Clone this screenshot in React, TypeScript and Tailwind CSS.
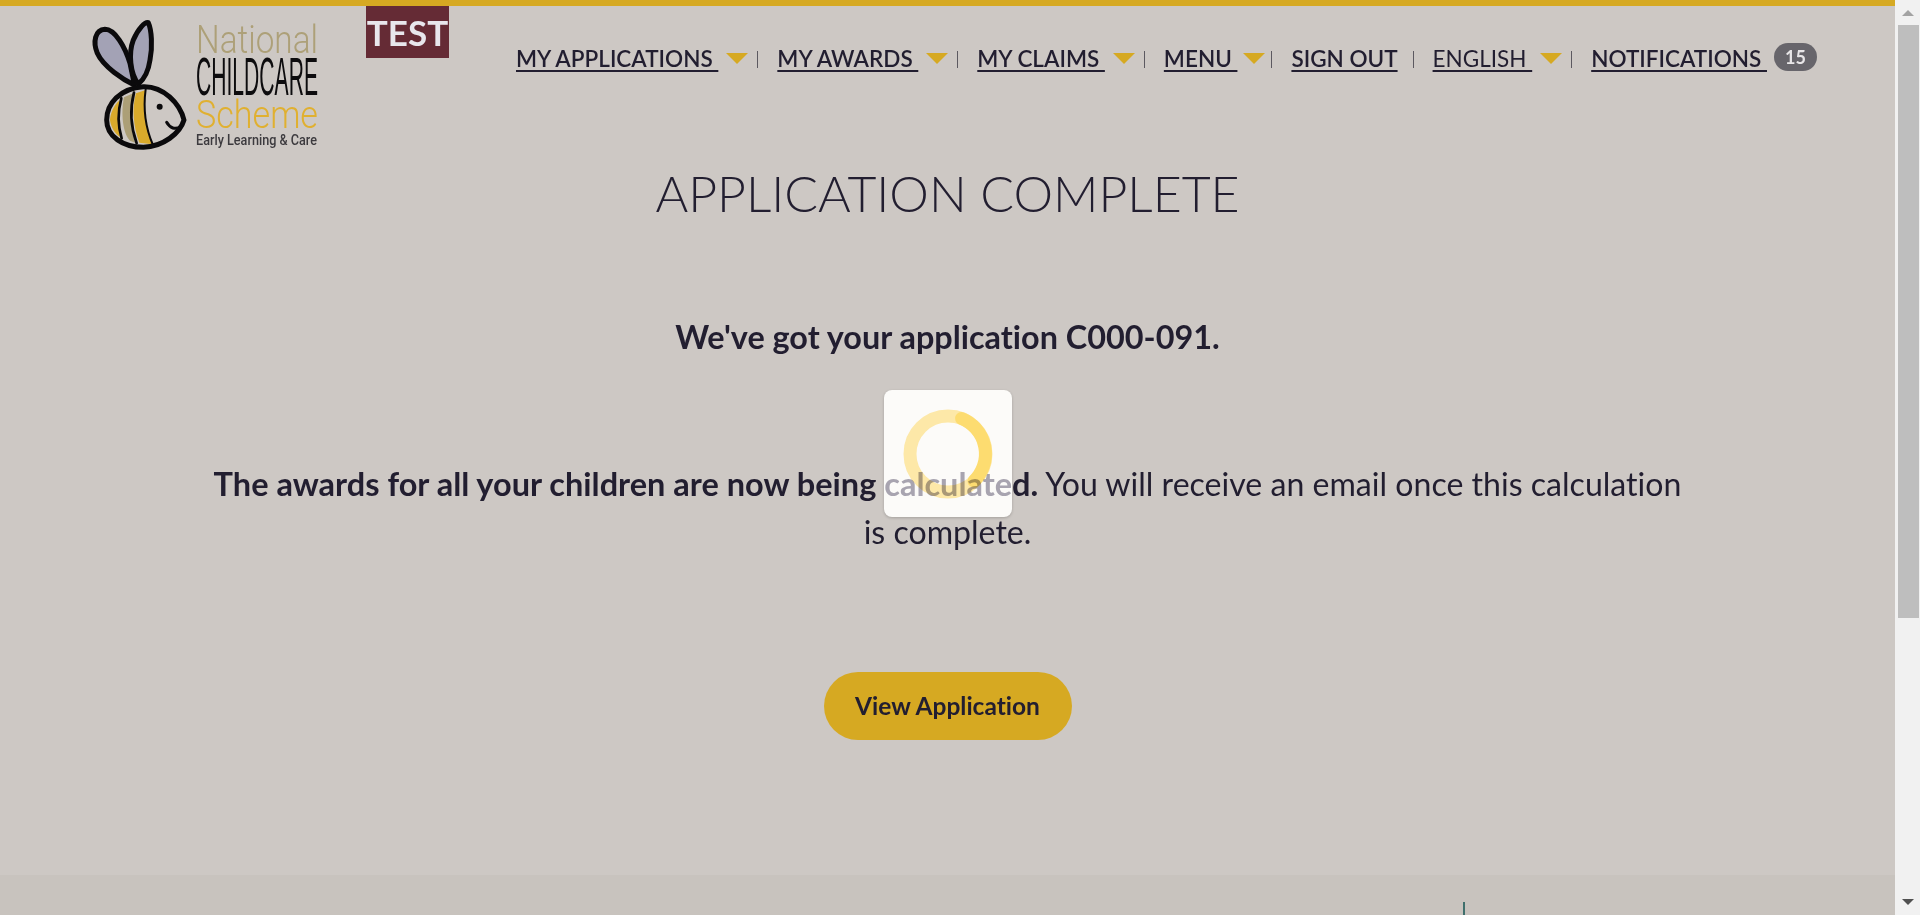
import React from "react";

const lato = "font-['Lato','Liberation_Sans',sans-serif]";

function Logo() {
  return (
    <svg width="250" height="150" viewBox="0 0 250 150" className="block shrink-0 overflow-visible">
      <g transform="scale(0.3333)" strokeLinejoin="round" strokeLinecap="round">
        <path d="M163,225 C130,210 70,170 52,130 C38,95 45,60 75,58 C105,58 135,110 150,160 C155,185 160,205 163,225Z" fill="#a3a2b5" stroke="#0b0a0c" strokeWidth="15" />
        <path d="M175,222 C150,190 145,130 160,90 C175,55 195,35 205,38 C215,60 218,110 210,150 C205,185 190,210 175,222Z" fill="#a3a2b5" stroke="#0b0a0c" strokeWidth="15" />
        <path d="M80,330 C80,280 120,235 190,230 C250,228 300,280 312,330 C300,370 250,410 190,412 C130,412 80,380 80,330Z" fill="#cdc8c4" />
        <path d="M120,270 C100,285 90,315 90,330 C92,350 105,372 122,382 C115,345 113,300 120,270Z" fill="#d9aa2b" />
        <path d="M132,262 L160,250 C148,290 150,350 165,398 L150,392 C128,370 122,310 132,262Z" fill="#ac9f77" />
        <path d="M168,250 L197,240 C190,290 195,350 217,403 L178,398 C160,350 155,295 168,250Z" fill="#d9aa2b" />
        <path d="M124,265 C113,305 113,345 125,385" fill="none" stroke="#0b0a0c" strokeWidth="8" />
        <path d="M162,248 C150,295 152,350 170,400" fill="none" stroke="#0b0a0c" strokeWidth="8" />
        <path d="M197,238 C190,290 195,350 219,405" fill="none" stroke="#0b0a0c" strokeWidth="6" />
        <path d="M80,330 C80,280 120,235 190,230 C250,228 300,280 312,330 C300,370 250,410 190,412 C130,412 80,380 80,330Z" fill="none" stroke="#0b0a0c" strokeWidth="15" />
        <circle cx="239" cy="290" r="9" fill="#0b0a0c" />
        <path d="M260,337 C270,355 285,360 303,350" fill="none" stroke="#0b0a0c" strokeWidth="9" />
      </g>
      <text x="116" y="43" fontFamily="Roboto, sans-serif" fontWeight="300" fontSize="39" fill="#ada078" textLength="122" lengthAdjust="spacingAndGlyphs">National</text>
      <text x="116" y="85" fontFamily="'Liberation Sans', sans-serif" fontSize="54" fill="#0d0c0e" textLength="122" lengthAdjust="spacingAndGlyphs">CHILDCARE</text>
      <text x="116" y="118" fontFamily="Roboto, sans-serif" fontWeight="300" fontSize="39" fill="#e0b030" textLength="122" lengthAdjust="spacingAndGlyphs">Scheme</text>
      <text x="116" y="135" fontFamily="Roboto, sans-serif" fontWeight="500" fontSize="14" fill="#3c3a3e" textLength="121" lengthAdjust="spacingAndGlyphs">Early Learning &amp; Care</text>
    </svg>
  );
}

function Tri({ tight }: { tight?: boolean }) {
  return <span className={`${tight ? "ml-[6px]" : "ml-[8px]"} mt-[-1px] h-0 w-0 border-x-[11px] border-t-[11px] border-x-transparent border-t-[#d6a922]`} />;
}

function Sep({ left = "ml-[9px]" }: { left?: string }) {
  return <span className={`${left} mr-[19px] h-[17px] w-px bg-[#5c5960]`} />;
}

function NavLink({ label, light }: { label: string; light?: boolean }) {
  return (
    <a className={`whitespace-pre underline decoration-2 underline-offset-[3px] ${light ? "font-normal" : "font-semibold"}`}>{label}</a>
  );
}

function Spinner() {
  return (
    <div className="absolute left-[884px] top-[390px] z-10 flex h-[127px] w-[128px] items-center justify-center rounded-lg bg-[#fcfbf9] shadow-[0_1px_3px_rgba(0,0,0,0.2)]">
      <svg width="128" height="127" viewBox="0 0 128 127" className="block">
        <circle cx="64" cy="64" r="38" fill="none" stroke="#fde8a8" strokeWidth="13" />
        <path d="M 77.5 28.5 A 38 38 0 0 1 90 91" fill="none" stroke="#fddc70" strokeWidth="13" strokeLinecap="round" />
      </svg>
    </div>
  );
}

export default function App() {
  return (
    <div className={`relative flex h-[915px] w-full overflow-hidden bg-[#cdc8c4] text-[#221e30] [font-variant-ligatures:none] ${lato}`}>
      <div className="flex min-w-0 flex-1 flex-col">
        <div className="h-[6px] shrink-0 bg-[#d6a922]" />
        <header className="flex h-[137px] shrink-0 items-start">
          <div className="ml-[80px] mt-[4px]"><Logo /></div>
          <div className="ml-[36px] flex h-[52px] w-[83px] items-center justify-center bg-[#652b35] text-[35px] font-bold leading-none text-[#e8e6ec]">TEST</div>
          <nav className="ml-[67px] mt-[35px] flex h-[36px] items-center text-[22.5px] leading-[30px] text-[#221e30]">
            <NavLink label="MY APPLICATIONS " /><Tri /><Sep />
            <NavLink label="MY AWARDS " /><Tri /><Sep />
            <NavLink label="MY CLAIMS " /><Tri /><Sep />
            <NavLink label="MENU " /><Tri tight /><Sep left="ml-[6px]" />
            <NavLink label="SIGN OUT" /><Sep left="ml-[15px]" />
            <NavLink label="ENGLISH " light /><Tri /><Sep />
            <NavLink label="NOTIFICATIONS " />
            <span className="ml-[7px] mt-[-4px] flex h-[28px] w-[43px] items-center justify-center rounded-full bg-[#67656b] text-[18px] font-bold text-[#e8e6e8]">15</span>
          </nav>
        </header>
        <main className="flex flex-col items-center text-center">
          <h1 className="mt-[20px] text-[50px] font-light leading-[60px] text-[#221e30]">APPLICATION COMPLETE</h1>
          <p className="mt-[90px] text-[32.4px] font-bold leading-[47px]">We've got your application C000-091.</p>
          <p className="mt-[100px] w-[1480px] text-[32.1px] leading-[47.5px]">
            <b className="text-[32.5px]">The awards for all your children are now being </b>
            <b className="relative z-20 text-[32.5px] text-[#aaa7b4] mix-blend-multiply">calculate</b>
            <b className="text-[32.5px]">d.</b> You will receive an email once this calculation is complete.
          </p>
          <a className="mt-[117px] flex h-[68px] w-[248px] items-center justify-center rounded-full bg-[#d6a922] text-[24.5px] font-bold text-[#221e30]">View Application</a>
        </main>
        <footer className="mt-auto h-[40px] shrink-0 bg-[#c8c3be]">
          <div className="ml-[1463px] mt-[27px] h-[13px] w-[2px] bg-[#3f6f6c]" />
        </footer>
      </div>
      <div className="flex w-[25px] shrink-0 flex-col items-center bg-[#f1f1f1]">
        <div className="mt-[10px] h-0 w-0 border-x-[6px] border-b-[6px] border-x-transparent border-b-[#a3a3a3]" />
        <div className="ml-[1px] mt-[9px] h-[593px] w-[21px] bg-[#bebebe]" />
        <div className="mt-auto mb-[10px] h-0 w-0 border-x-[6px] border-t-[6px] border-x-transparent border-t-[#505050]" />
      </div>
      <Spinner />
    </div>
  );
}
